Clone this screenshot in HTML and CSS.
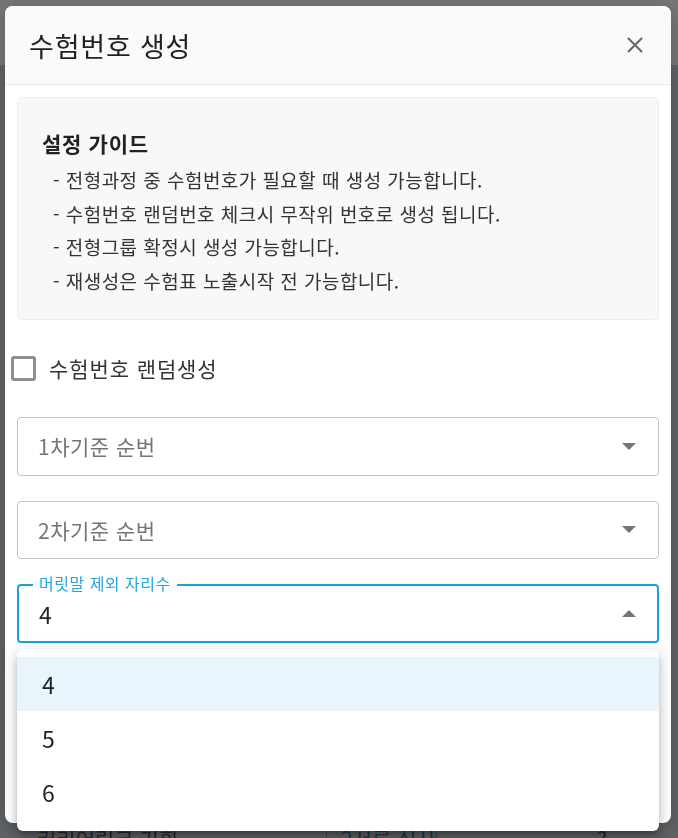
FILE: index.html
```html
<!DOCTYPE html>
<html lang="ko">
<head>
  <meta charset="UTF-8">
  <meta name="viewport" content="width=device-width, initial-scale=1.0">
  <title>수험번호 생성</title>
  <link rel="stylesheet" href="styles.css">
</head>
<body>
  <!-- 뒤쪽 페이지 (모달 배경으로 어둡게 보임) -->
  <div class="page">
    <div class="page-top"></div>
    <div class="page-main">
      <div class="page-row">
        <span class="cell cell-name">커리어링크 기획</span>
        <span class="cell cell-step">2서류 심사</span>
        <span class="cell cell-more">?</span>
      </div>
    </div>
  </div>

  <div class="modal">
    <div class="modal-header">
      <h2 class="modal-title">수험번호 생성</h2>
      <button class="modal-close" aria-label="닫기">
        <svg width="18" height="18" viewBox="0 0 18 18">
          <path d="M2 2L16 16M16 2L2 16" stroke="#666" stroke-width="2" fill="none"/>
        </svg>
      </button>
    </div>

    <div class="modal-body">
      <div class="guide">
        <h3 class="guide-title">설정 가이드</h3>
        <ul class="guide-list">
          <li>- 전형과정 중 수험번호가 필요할 때 생성 가능합니다.</li>
          <li>- 수험번호 랜덤번호 체크시 무작위 번호로 생성 됩니다.</li>
          <li>- 전형그룹 확정시 생성 가능합니다.</li>
          <li>- 재생성은 수험표 노출시작 전 가능합니다.</li>
        </ul>
      </div>

      <label class="check-row">
        <span class="check-box"></span>
        <span class="check-label">수험번호 랜덤생성</span>
      </label>

      <div class="select">
        <span class="select-placeholder">1차기준 순번</span>
        <svg class="select-arrow" width="14" height="7" viewBox="0 0 14 7"><path d="M0 0h14L7 7z" fill="#757575"/></svg>
      </div>

      <div class="select">
        <span class="select-placeholder">2차기준 순번</span>
        <svg class="select-arrow" width="14" height="7" viewBox="0 0 14 7"><path d="M0 0h14L7 7z" fill="#757575"/></svg>
      </div>

      <div class="select is-open">
        <span class="select-label">머릿말 제외 자리수</span>
        <span class="select-value">4</span>
        <svg class="select-arrow" width="14" height="7" viewBox="0 0 14 7"><path d="M0 7h14L7 0z" fill="#757575"/></svg>
      </div>
    </div>
  </div>

  <ul class="menu">
    <li class="menu-item is-selected">4</li>
    <li class="menu-item">5</li>
    <li class="menu-item">6</li>
  </ul>
</body>
</html>
```

FILE: styles.css
```css
* {
  box-sizing: border-box;
}
body {
  margin: 0;
  font-family: "Noto Sans CJK KR", "Noto Sans", sans-serif;
  color: #222;
  overflow: hidden;
  height: 838px;
}

/* 뒤쪽 페이지 */
.page {
  height: 838px;
  display: flex;
  flex-direction: column;
  background: #5f6366;
}
.page-top {
  height: 65px;
  background: #767676;
}
.page-main {
  flex: 1;
  display: flex;
  flex-direction: column;
  justify-content: flex-end;
}
.page-row {
  display: flex;
  height: 24px;
  margin-bottom: -12px;
  font-size: 21px;
  line-height: 24px;
  color: #25292b;
}
.cell-name {
  width: 326px;
  padding-left: 37px;
}
.cell-step {
  width: 111px;
  padding-left: 14px;
  border-left: 1px solid #43484b;
  border-right: 1px solid #43484b;
  color: #173a50;
}
.cell-more {
  padding-left: 160px;
}

/* 모달 */
.modal {
  position: fixed;
  left: 5px;
  top: 6px;
  width: 666px;
  height: 817px;
  background: #fff;
  border-radius: 8px;
  overflow: hidden;
  box-shadow: 0 4px 20px rgba(0,0,0,0.2);
}
.modal-header {
  height: 79px;
  display: flex;
  align-items: center;
  justify-content: space-between;
  padding: 0 27px 0 24px;
  background: #fafafa;
  border-bottom: 1px solid #ebebeb;
}
.modal-title {
  margin: 0;
  font-size: 27px;
  letter-spacing: 0.8px;
  font-weight: 400;
  color: #222;
}
.modal-close {
  border: none;
  background: none;
  padding: 0;
  width: 18px;
  height: 18px;
  display: flex;
  cursor: pointer;
}
.modal-body {
  padding: 12px;
}

.guide {
  height: 223px;
  padding: 31px 24px 0;
  background: #f8f8f8;
  border: 1px solid #eeeeee;
  border-radius: 4px;
}
.guide-title {
  margin: 0 0 6px;
  font-size: 21px;
  letter-spacing: 0.7px;
  line-height: 28px;
  font-weight: 700;
  color: #222;
}
.guide-list {
  list-style: none;
  margin: 0;
  padding: 0 0 0 11px;
  font-size: 19px;
  letter-spacing: 0.45px;
  line-height: 33.5px;
  color: #333;
}

.check-row {
  display: flex;
  align-items: center;
  gap: 13px;
  height: 48px;
  margin: 24px 0 0 -6px;
  cursor: pointer;
}
.check-box {
  width: 25px;
  height: 25px;
  border: 3px solid #8e8e8e;
  border-radius: 3px;
}
.check-label {
  font-size: 21px;
  letter-spacing: 0.9px;
  color: #333;
}

.select {
  position: relative;
  height: 58.5px;
  margin-top: 25px;
  display: flex;
  align-items: center;
  justify-content: space-between;
  padding: 0 22px 0 20px;
  border: 1px solid #c4c4c4;
  border-radius: 4px;
  font-size: 21px;
  letter-spacing: 0.5px;
}
.select-placeholder {
  color: #757575;
}
.select.is-open {
  height: 59px;
  padding: 0 21px 0 20px;
  border: 2px solid #18a2e0;
}
.select-label {
  position: absolute;
  left: 14px;
  top: -13px;
  padding: 0 6px;
  background: #fff;
  font-size: 16px;
  letter-spacing: 0.5px;
  line-height: 20px;
  color: #22a5e0;
}
.select-value {
  font-size: 23px;
  color: #222;
}

/* 펼쳐진 옵션 목록 */
.menu {
  position: fixed;
  left: 17px;
  top: 649px;
  width: 642px;
  height: 182px;
  margin: 0;
  padding: 8px 0;
  list-style: none;
  background: #fff;
  border-radius: 6px;
  box-shadow: 0 5px 5px -3px rgba(0,0,0,0.2), 0 8px 10px 1px rgba(0,0,0,0.14), 0 3px 14px 2px rgba(0,0,0,0.12);
}
.menu-item {
  height: 54px;
  display: flex;
  align-items: center;
  padding-left: 25px;
  font-size: 23px;
  color: #222;
}
.menu-item.is-selected {
  background: #e9f5fd;
}
```
